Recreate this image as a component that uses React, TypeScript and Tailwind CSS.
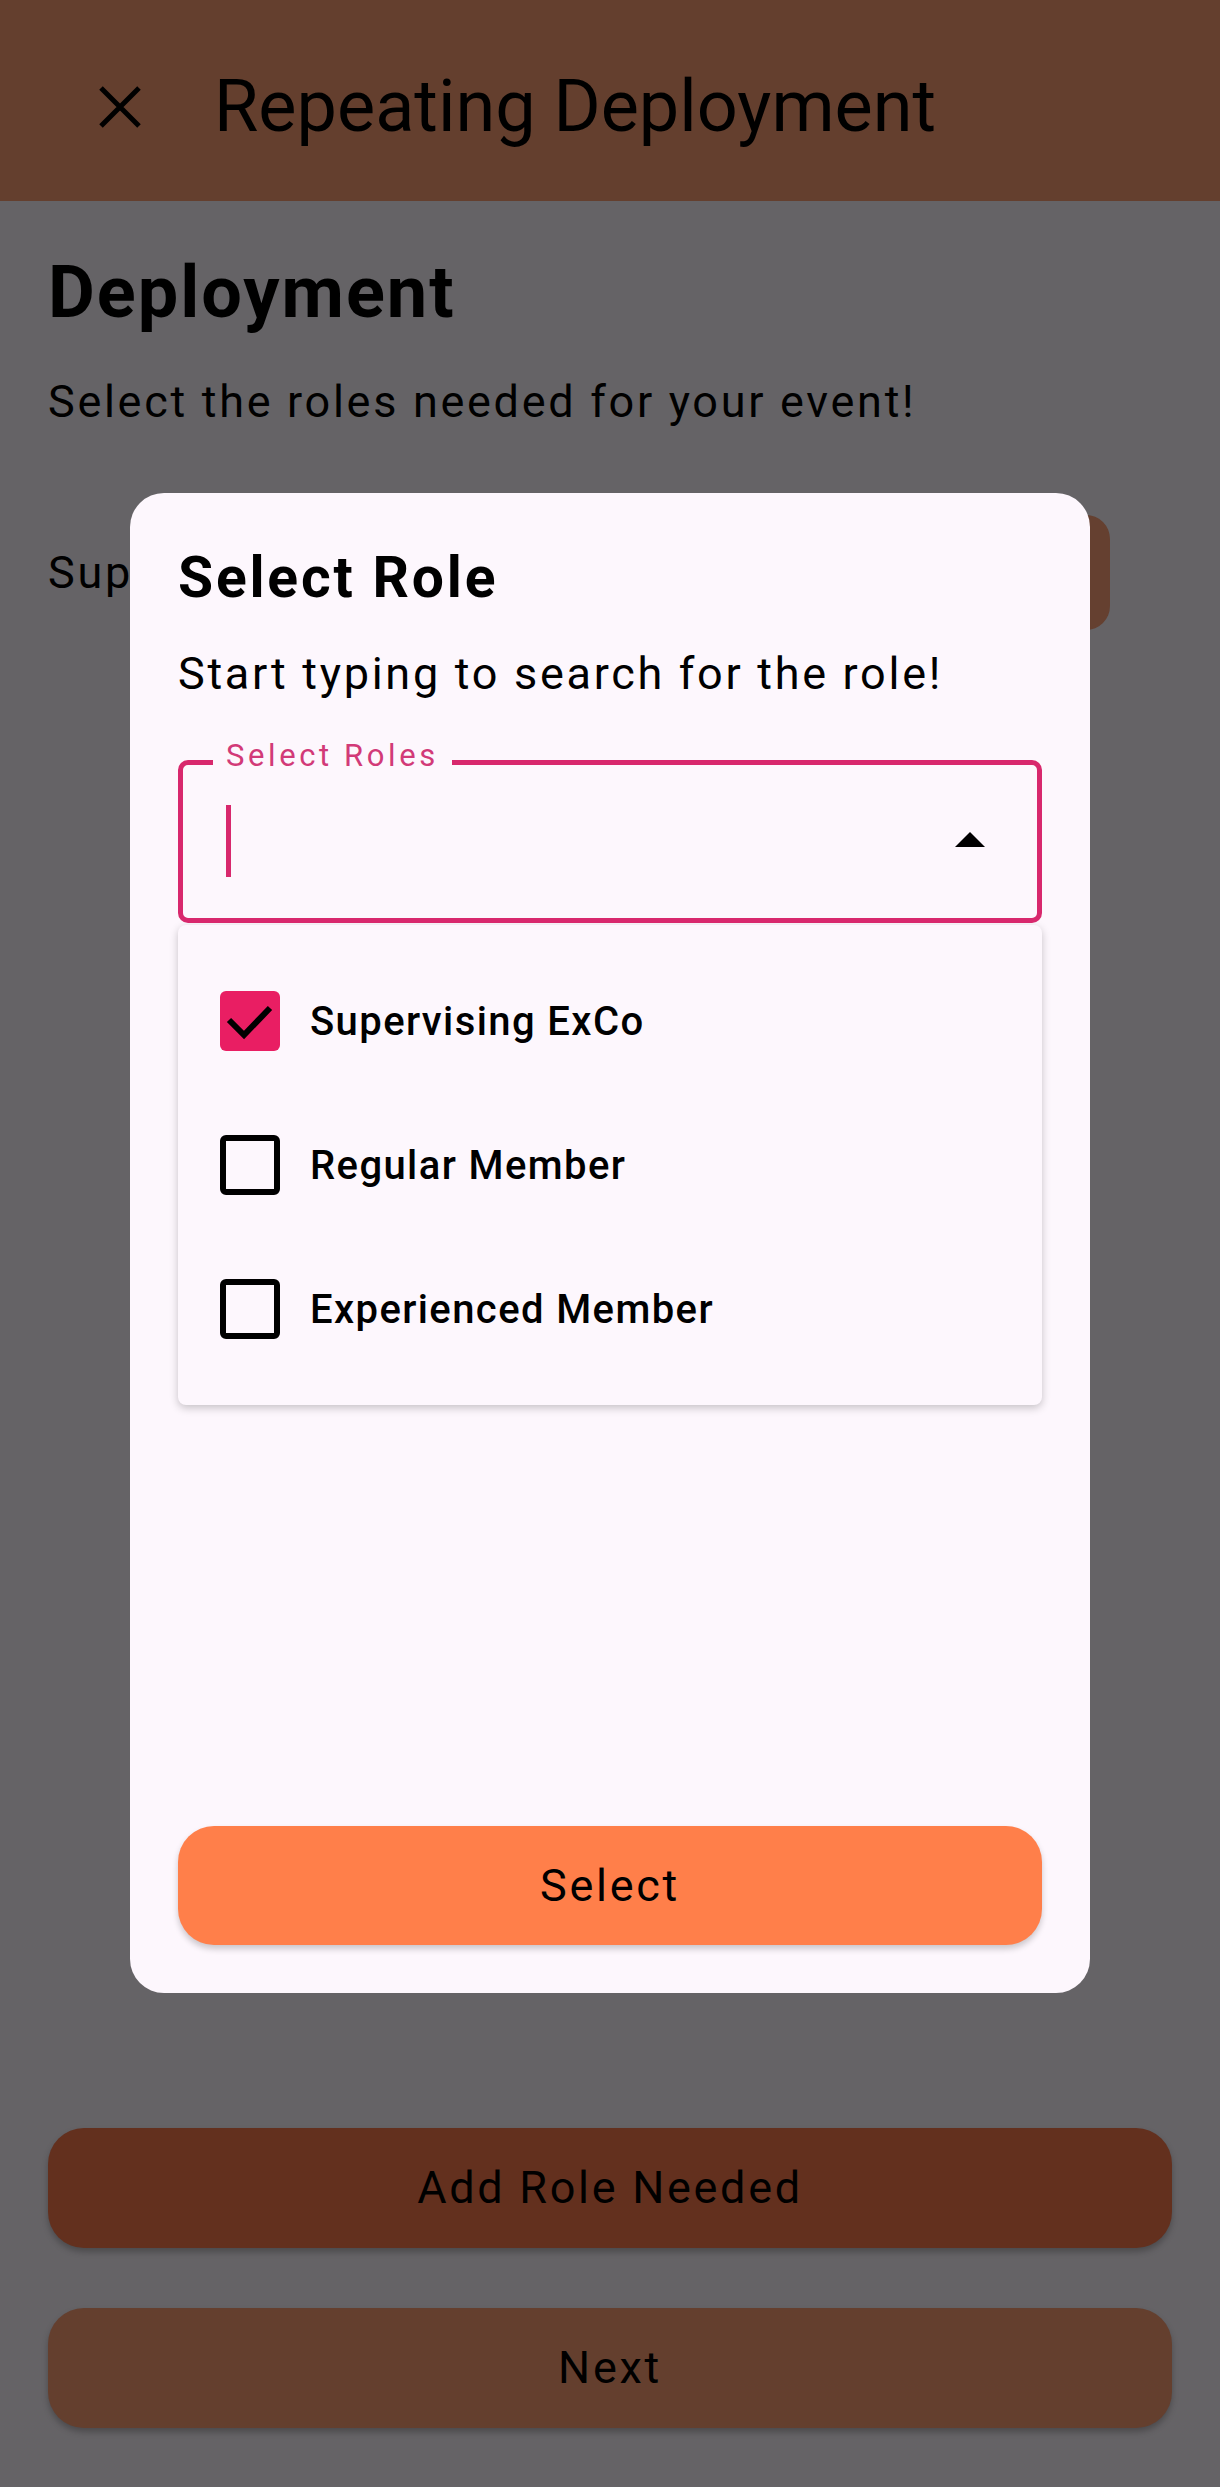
import React from "react";

const font = { fontFamily: "Roboto, 'Noto Sans', sans-serif" };

function CheckRow({ label, checked }: { label: string; checked?: boolean }) {
  return (
    <div className="flex h-[144px] items-center pl-[42px]">
      {checked ? (
        <div className="flex h-[60px] w-[60px] items-center justify-center rounded-[6px] bg-[#e91e63]">
          <svg width="60" height="60" viewBox="0 0 60 60">
            <path d="M9 29 L24 44 L50 17" fill="none" stroke="#000" strokeWidth="6" />
          </svg>
        </div>
      ) : (
        <div className="h-[60px] w-[60px] rounded-[6px] border-[6px] border-black" />
      )}
      <span className="ml-[30px] text-[40px] font-medium leading-[47px] tracking-[1.4px] text-black">
        {label}
      </span>
    </div>
  );
}

export default function App() {
  return (
    <div className="relative flex h-[2487px] w-[1220px] flex-col overflow-hidden bg-[#656366]" style={font}>
      {/* App bar */}
      <div className="flex h-[201px] shrink-0 items-center bg-[#643f2e] pl-[99px] pt-[12px]">
        <svg width="42" height="42" viewBox="0 0 42 42">
          <path d="M2 2 L40 40 M40 2 L2 40" stroke="#000" strokeWidth="5" fill="none" />
        </svg>
        <span className="ml-[73px] text-[72px] leading-[84px] text-black">Repeating Deployment</span>
      </div>

      {/* Page content */}
      <div className="flex flex-1 flex-col px-[48px] pt-[50px]">
        <h1 className="text-[72px] font-bold leading-[84px] tracking-[2px] text-black">Deployment</h1>
        <p className="mt-[41px] text-[45px] leading-[52px] tracking-[2.7px] text-black">
          Select the roles needed for your event!
        </p>
        <div className="mt-[87px] flex h-[115px] items-center justify-between pr-[62px]">
          <span className="text-[45px] leading-[52px] tracking-[2.7px] text-black">Supervising ExCo</span>
          <div className="h-[115px] w-[220px] rounded-[24px] bg-[#654030]" />
        </div>

        <div className="mt-auto flex flex-col gap-[60px] pb-[59px]">
          <button className="flex h-[120px] w-full items-center justify-center rounded-[36px] bg-[#63301e] text-[45px] tracking-[2.7px] text-black shadow-[0_4px_6px_rgba(0,0,0,0.25)]">
            Add Role Needed
          </button>
          <button className="flex h-[120px] w-full items-center justify-center rounded-[36px] bg-[#643f2e] text-[45px] tracking-[2.7px] text-black shadow-[0_4px_6px_rgba(0,0,0,0.25)]">
            Next
          </button>
        </div>
      </div>

      {/* Dialog */}
      <div className="absolute left-[130px] top-[493px] flex h-[1500px] w-[960px] flex-col rounded-[34px] bg-[#fdf7fd] px-[48px] pb-[48px] pt-[51px]">
        <h2 className="text-[57px] font-bold leading-[67px] tracking-[2.8px] text-black">Select Role</h2>
        <p className="mt-[36px] text-[45px] leading-[53px] tracking-[2.7px] text-black">
          Start typing to search for the role!
        </p>

        <div className="relative mt-[60px] h-[163px] rounded-[10px] border-[5px] border-[#d8286d]">
          <span className="absolute left-[30px] top-[-27px] bg-[#fdf7fd] px-[13px] text-[31px] leading-[36px] tracking-[3.6px] text-[#d23a78]">
            Select Roles
          </span>
          <div className="absolute left-[43px] top-[40px] h-[72px] w-[5px] bg-[#d8286d]" />
          <svg className="absolute right-[52px] top-[67px]" width="30" height="15" viewBox="0 0 30 15">
            <path d="M0 15 L15 0 L30 15 Z" fill="#000" />
          </svg>
        </div>

        <div className="mt-[2px] rounded-[8px] bg-[#fdf7fd] py-[24px] shadow-[0_3px_8px_rgba(0,0,0,0.22)]">
          <CheckRow label="Supervising ExCo" checked />
          <CheckRow label="Regular Member" />
          <CheckRow label="Experienced Member" />
        </div>

        <button className="mt-auto flex h-[119px] w-full items-center justify-center rounded-[36px] bg-[#ff7f4a] text-[45px] tracking-[2.7px] text-black shadow-[0_4px_6px_rgba(0,0,0,0.2)]">
          Select
        </button>
      </div>
    </div>
  );
}
